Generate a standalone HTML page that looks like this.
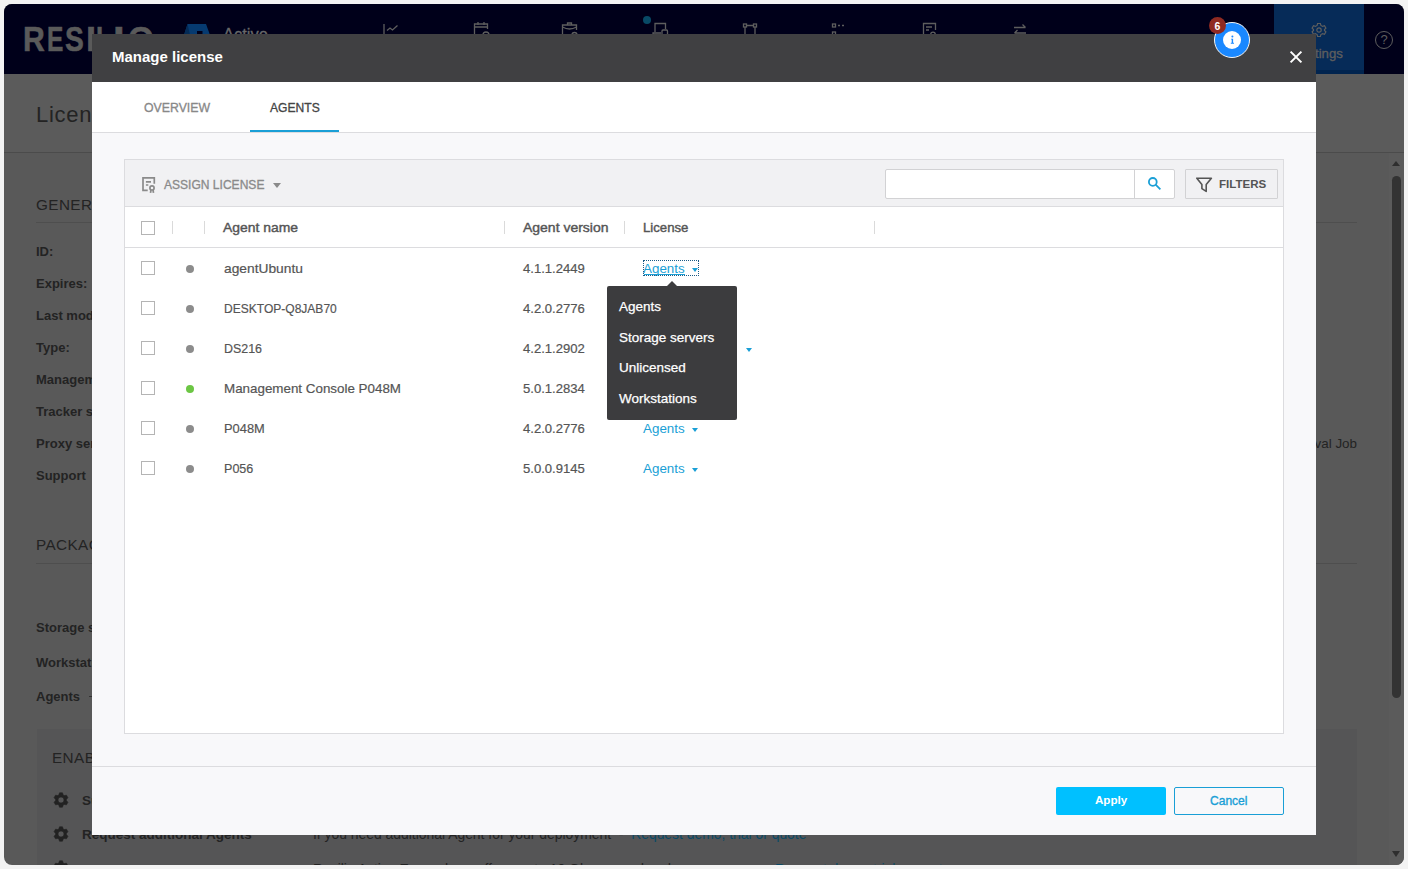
<!DOCTYPE html>
<html><head><meta charset="utf-8">
<style>
*{margin:0;padding:0;box-sizing:border-box}
html,body{width:1408px;height:869px;overflow:hidden;background:#f3f3f3;font-family:"Liberation Sans",sans-serif}
.a{position:absolute}
.t{position:absolute;white-space:nowrap;line-height:1}
#win{position:absolute;left:4px;top:4px;width:1400px;height:861px;border-radius:8px;overflow:hidden;background:#595959}
</style></head><body>
<div id="win">
  <!-- nav -->
  <div class="a" style="left:0;top:0;width:1400px;height:70px;background:#00001a"></div>
  <div class="a" style="left:1270px;top:0;width:90px;height:70px;background:#062b58"></div>
  <div class="a" style="left:1270px;top:66px;width:90px;height:4px;background:#01244f"></div>
  <!-- page header -->
  <div class="a" style="left:0;top:70px;width:1400px;height:79px;background:#5b5b5b;border-bottom:1px solid #4b4b4b"></div>
<div class="a" style="left:-4px;top:-4px;width:1408px;height:869px">
<div class="a" id="logo" style="left:0;top:0"><div class="t" style="left:22.53px;top:20.8px;font-size:35px;font-weight:bold;color:#5a5a5a;-webkit-text-stroke:0.6px #5a5a5a;transform:scaleX(0.861);transform-origin:0 0">R</div><div class="t" style="left:46.86px;top:20.8px;font-size:35px;font-weight:bold;color:#5a5a5a;-webkit-text-stroke:0.6px #5a5a5a;transform:scaleX(0.699);transform-origin:0 0">E</div><div class="t" style="left:65.47px;top:20.8px;font-size:35px;font-weight:bold;color:#5a5a5a;-webkit-text-stroke:0.6px #5a5a5a;transform:scaleX(0.806);transform-origin:0 0">S</div><div class="t" style="left:86.18px;top:20.8px;font-size:35px;font-weight:bold;color:#5a5a5a;-webkit-text-stroke:0.6px #5a5a5a;transform:scaleX(1.032);transform-origin:0 0">I</div><div class="t" style="left:95.78px;top:20.8px;font-size:35px;font-weight:bold;color:#5a5a5a;-webkit-text-stroke:0.6px #5a5a5a;transform:scaleX(0.738);transform-origin:0 0">L</div><div class="t" style="left:112.84px;top:20.8px;font-size:35px;font-weight:bold;color:#5a5a5a;-webkit-text-stroke:0.6px #5a5a5a;transform:scaleX(1.194);transform-origin:0 0">I</div><div class="t" style="left:128.32px;top:20.8px;font-size:35px;font-weight:bold;color:#5a5a5a;-webkit-text-stroke:0.6px #5a5a5a;transform:scaleX(0.949);transform-origin:0 0">O</div></div>
<svg class="a" style="left:182px;top:22px" width="30" height="20" viewBox="0 0 30 20"><path d="M5.5 2H24L28 13H2Z" fill="#063a70"/><path d="M5.5 2L2 13H8Z" fill="#042a55"/><path d="M15 9H20.5V13H15Z" fill="#00001a"/></svg>
<div class="t" style="left:223px;top:25.5px;font-size:16.5px;color:#686868;-webkit-text-stroke:0.3px #686868">Active</div>
<svg class="a" style="left:380px;top:20px" width="22" height="16" viewBox="0 0 22 16" fill="none" stroke="#5e5e5e" stroke-width="1.3"><path d="M4 4V16"/><path d="M7 10.5L10 8L12.5 10L17.5 5.5"/></svg>
<svg class="a" style="left:472px;top:20px" width="20" height="16" viewBox="0 0 20 16" fill="none" stroke="#5e5e5e" stroke-width="1.3"><path d="M2.5 15V4H15.5V9"/><path d="M2.5 7H15.5"/><path d="M6 2V5M12 2V5"/><circle cx="14" cy="15" r="3"/></svg>
<svg class="a" style="left:560px;top:20px" width="20" height="16" viewBox="0 0 20 16" fill="none" stroke="#5e5e5e" stroke-width="1.3"><path d="M2.5 15V5H16.5V10"/><path d="M7.5 5V3H11.5V5"/><path d="M2.5 7Q9.5 11 16.5 7"/><circle cx="14.5" cy="15" r="2.5"/></svg>
<div class="a" style="left:643px;top:16px;width:8px;height:8px;border-radius:50%;background:#084a66"></div>
<svg class="a" style="left:650px;top:20px" width="20" height="16" viewBox="0 0 20 16" fill="none" stroke="#5e5e5e" stroke-width="1.3"><path d="M5 12V3.5H15.5V9"/><path d="M3 15V13H11"/><rect x="12" y="10" width="5.5" height="6" rx="1"/></svg>
<svg class="a" style="left:740px;top:20px" width="20" height="16" viewBox="0 0 20 16" fill="none" stroke="#5e5e5e" stroke-width="1.3"><rect x="3.5" y="4" width="3" height="3"/><rect x="13.5" y="4" width="3" height="3"/><path d="M6.5 5.5H13.5M5 7V14M15 7V14"/></svg>
<svg class="a" style="left:830px;top:20px" width="20" height="16" viewBox="0 0 20 16" fill="none" stroke="#5e5e5e" stroke-width="1.3"><rect x="2.5" y="4" width="3" height="3"/><path d="M8 5.5H10M12 5.5H14"/><rect x="2.5" y="12" width="3" height="3"/></svg>
<svg class="a" style="left:920px;top:20px" width="20" height="16" viewBox="0 0 20 16" fill="none" stroke="#5e5e5e" stroke-width="1.3"><path d="M8 15H3.5V3.5H15.5V10"/><path d="M6 7H12M6 10H9"/><circle cx="13" cy="14.5" r="2.3"/></svg>
<svg class="a" style="left:1010px;top:20px" width="20" height="16" viewBox="0 0 20 16" fill="none" stroke="#5e5e5e" stroke-width="1.3"><path d="M4 7.5H15.5M12.5 4.5L15.5 7.5"/><path d="M16 13H4.5M7.5 10L4.5 13"/></svg>
<svg class="a" style="left:1311px;top:22px" width="16" height="16" viewBox="0 0 16 16" fill="none" stroke="#5e5e5e" stroke-width="1.2"><path d="M6.6 1.5H9.4L9.9 3.4L11.6 4.4L13.5 3.8L14.9 6.2L13.5 7.6V8.4L14.9 9.8L13.5 12.2L11.6 11.6L9.9 12.6L9.4 14.5H6.6L6.1 12.6L4.4 11.6L2.5 12.2L1.1 9.8L2.5 8.4V7.6L1.1 6.2L2.5 3.8L4.4 4.4L6.1 3.4Z"/><circle cx="8" cy="8" r="2.2"/></svg>
<div class="t" style="left:1290px;top:47px;font-size:13.2px;color:#5e5e5e;width:58px;text-align:center;-webkit-text-stroke:0.35px #5e5e5e">Settings</div>
<div class="a" style="left:1375px;top:31px;width:18px;height:18px;border-radius:50%;border:1.3px solid #5e5e5e"></div>
<div class="t" style="left:1375px;top:33px;width:18px;text-align:center;font-size:13px;color:#5e5e5e">?</div>
<div class="t" style="left:36px;top:103.5px;font-size:22px;color:#232323;letter-spacing:0.7px">License</div>
<div class="t" style="left:36px;top:196.8px;font-size:15.3px;color:#232323;letter-spacing:0.4px">GENERAL</div>
<div class="a" style="left:36px;top:222px;width:1321px;height:1px;background:#4e4e4e"></div>
<div class="t" style="left:36px;top:245px;font-size:13px;font-weight:bold;color:#232323">ID:</div>
<div class="t" style="left:36px;top:277px;font-size:13px;font-weight:bold;color:#232323">Expires:</div>
<div class="t" style="left:36px;top:309px;font-size:13px;font-weight:bold;color:#232323">Last modified:</div>
<div class="t" style="left:36px;top:341px;font-size:13px;font-weight:bold;color:#232323">Type:</div>
<div class="t" style="left:36px;top:373px;font-size:13px;font-weight:bold;color:#232323">Management Console:</div>
<div class="t" style="left:36px;top:405px;font-size:13px;font-weight:bold;color:#232323">Tracker server:</div>
<div class="t" style="left:36px;top:437px;font-size:13px;font-weight:bold;color:#232323">Proxy server:</div>
<div class="t" style="left:36px;top:469px;font-size:13px;font-weight:bold;color:#232323">Support</div>
<div class="t" style="left:1257px;top:436.6px;font-size:13.4px;color:#232323;width:100px;text-align:right">Retrieval Job</div>
<div class="t" style="left:36px;top:536.8px;font-size:15.3px;color:#232323;letter-spacing:0.4px">PACKAGES</div>
<div class="a" style="left:36px;top:563px;width:1321px;height:1px;background:#4e4e4e"></div>
<div class="t" style="left:36px;top:621px;font-size:13px;font-weight:bold;color:#232323">Storage servers</div>
<div class="t" style="left:36px;top:656px;font-size:13px;font-weight:bold;color:#232323">Workstations</div>
<div class="t" style="left:36px;top:690px;font-size:13px;font-weight:bold;color:#232323">Agents</div>
<div class="a" style="left:89px;top:696px;width:3px;height:1px;background:#333"></div>
<div class="a" style="left:37px;top:729px;width:1320px;height:140px;background:#555556"></div>
<div class="t" style="left:52px;top:749.8px;font-size:15.3px;color:#232323;letter-spacing:0.4px">ENABLED FEATURES</div>
<svg class="a" style="left:53px;top:792px" width="16" height="16" viewBox="0 0 16 16"><path fill="#222" fill-rule="evenodd" stroke="#222" stroke-width="0.6" stroke-linejoin="round" d="M5.86 2.93L6.51 0.85L9.49 0.85L10.14 2.93L11.32 3.61L13.44 3.14L14.93 5.72L13.46 7.32L13.46 8.68L14.93 10.28L13.44 12.86L11.32 12.39L10.14 13.07L9.49 15.15L6.51 15.15L5.86 13.07L4.68 12.39L2.56 12.86L1.07 10.28L2.54 8.68L2.54 7.32L1.07 5.72L2.56 3.14L4.68 3.61ZM8 5A3 3 0 1 0 8 11A3 3 0 1 0 8 5Z"/></svg>
<svg class="a" style="left:53px;top:826px" width="16" height="16" viewBox="0 0 16 16"><path fill="#222" fill-rule="evenodd" stroke="#222" stroke-width="0.6" stroke-linejoin="round" d="M5.86 2.93L6.51 0.85L9.49 0.85L10.14 2.93L11.32 3.61L13.44 3.14L14.93 5.72L13.46 7.32L13.46 8.68L14.93 10.28L13.44 12.86L11.32 12.39L10.14 13.07L9.49 15.15L6.51 15.15L5.86 13.07L4.68 12.39L2.56 12.86L1.07 10.28L2.54 8.68L2.54 7.32L1.07 5.72L2.56 3.14L4.68 3.61ZM8 5A3 3 0 1 0 8 11A3 3 0 1 0 8 5Z"/></svg>
<svg class="a" style="left:53px;top:860px" width="16" height="16" viewBox="0 0 16 16"><path fill="#222" fill-rule="evenodd" stroke="#222" stroke-width="0.6" stroke-linejoin="round" d="M5.86 2.93L6.51 0.85L9.49 0.85L10.14 2.93L11.32 3.61L13.44 3.14L14.93 5.72L13.46 7.32L13.46 8.68L14.93 10.28L13.44 12.86L11.32 12.39L10.14 13.07L9.49 15.15L6.51 15.15L5.86 13.07L4.68 12.39L2.56 12.86L1.07 10.28L2.54 8.68L2.54 7.32L1.07 5.72L2.56 3.14L4.68 3.61ZM8 5A3 3 0 1 0 8 11A3 3 0 1 0 8 5Z"/></svg>
<div class="t" style="left:82px;top:794px;font-size:13.5px;font-weight:bold;color:#232323">Support</div>
<div class="t" style="left:82px;top:828px;font-size:13.5px;font-weight:bold;color:#232323">Request additional Agents</div>
<div class="t" style="left:313px;top:828px;font-size:13.9px;color:#232323">If you need additional Agent for your deployment&nbsp; - &nbsp;<span style="color:#0a4a66">Request demo, trial or quote</span></div>
<div class="t" style="left:82px;top:863px;font-size:13.5px;font-weight:bold;color:#232323">Request Max Speed</div>
<div class="t" style="left:313px;top:863px;font-size:13.9px;color:#232323">Resilio Active Everywhere offers up to 10 Gbps speed and more</div><div class="t" style="left:775px;top:863px;font-size:13.9px;color:#0a4a66">Request demo, trial or quote</div>
<div class="a" style="left:1389px;top:153px;width:15px;height:716px;background:#5b5b5b"></div>
<div class="a" style="left:1392px;top:161px;width:0;height:0;border-left:4.5px solid transparent;border-right:4.5px solid transparent;border-bottom:5px solid #2e2e2e"></div>
<div class="a" style="left:1392px;top:176px;width:9px;height:522px;border-radius:4.5px;background:#333"></div>
<div class="a" style="left:1392px;top:850.5px;width:0;height:0;border-left:4.5px solid transparent;border-right:4.5px solid transparent;border-top:6px solid #2e2e2e"></div>
</div>
</div>

<!-- MODAL -->
<div class="a" style="left:92px;top:34px;width:1224px;height:801px;background:#f8f8fa"></div>
<div class="a" style="left:92px;top:34px;width:1224px;height:48px;background:#404042"></div>
<div class="t" style="left:112px;top:49.3px;font-size:15.5px;font-weight:bold;color:#fff;transform:scaleX(0.968);transform-origin:0 0">Manage license</div>
<div class="a" style="left:92px;top:82px;width:1224px;height:51px;background:#fff;border-bottom:1px solid #dcdcdf"></div>
<div class="t" style="left:144px;top:102px;font-size:12.3px;color:#888;-webkit-text-stroke:0.3px #888">OVERVIEW</div>
<div class="t" style="left:270px;top:102px;font-size:12.1px;color:#444;-webkit-text-stroke:0.3px #444">AGENTS</div>
<div class="a" style="left:250px;top:130px;width:89px;height:2px;background:#1a9fd6"></div>

<!-- table box -->
<div class="a" style="left:124px;top:159px;width:1160px;height:575px;background:#fff;border:1px solid #dcdcdf"></div>
<div class="a" style="left:125px;top:160px;width:1158px;height:47px;background:#f1f1f3;border-bottom:1px solid #dcdcdf"></div>
<div class="a" style="left:125px;top:247px;width:1158px;height:1px;background:#dcdcdf"></div>

<!-- rows -->
<div class="a" style="left:141px;top:221px;width:14px;height:14px;border:1px solid #b4b4b4;background:#fff"></div>
<div class="a" style="left:172px;top:221px;width:1px;height:13px;background:#dadada"></div>
<div class="a" style="left:204px;top:221px;width:1px;height:13px;background:#dadada"></div>
<div class="a" style="left:504px;top:221px;width:1px;height:13px;background:#dadada"></div>
<div class="a" style="left:624px;top:221px;width:1px;height:13px;background:#dadada"></div>
<div class="a" style="left:874px;top:221px;width:1px;height:13px;background:#dadada"></div>
<div class="t" style="left:223px;top:221px;font-size:13px;color:#555;-webkit-text-stroke:0.4px #555;transform:scaleX(1.070);transform-origin:0 0">Agent name</div>
<div class="t" style="left:523px;top:221px;font-size:13px;color:#555;-webkit-text-stroke:0.4px #555;transform:scaleX(1.075);transform-origin:0 0">Agent version</div>
<div class="t" style="left:643px;top:221px;font-size:13px;color:#555;-webkit-text-stroke:0.4px #555;transform:scaleX(1.014);transform-origin:0 0">License</div>
<div class="a" style="left:141px;top:261px;width:14px;height:14px;border:1px solid #b4b4b4;background:#fff"></div>
<div class="a" style="left:186px;top:265px;width:8px;height:8px;border-radius:50%;background:#8c8c8c"></div>
<div class="t" style="left:223.60px;top:262px;font-size:13.5px;color:#555;-webkit-text-stroke:0.2px #555;transform:scaleX(1.021);transform-origin:0 0">agentUbuntu</div>
<div class="t" style="left:523px;top:262px;font-size:13.1px;color:#555;-webkit-text-stroke:0.2px #555">4.1.1.2449</div>
<div class="t" style="left:643px;top:262px;font-size:13.4px;color:#1a9fd6">Agents</div>
<div class="a" style="left:691.5px;top:268px;width:0;height:0;border-left:3.5px solid transparent;border-right:3.5px solid transparent;border-top:4px solid #1a9fd6"></div>
<div class="a" style="left:141px;top:301px;width:14px;height:14px;border:1px solid #b4b4b4;background:#fff"></div>
<div class="a" style="left:186px;top:305px;width:8px;height:8px;border-radius:50%;background:#8c8c8c"></div>
<div class="t" style="left:223.60px;top:302px;font-size:13.5px;color:#555;-webkit-text-stroke:0.2px #555;transform:scaleX(0.891);transform-origin:0 0">DESKTOP-Q8JAB70</div>
<div class="t" style="left:523px;top:302px;font-size:13.1px;color:#555;-webkit-text-stroke:0.2px #555">4.2.0.2776</div>
<div class="a" style="left:141px;top:341px;width:14px;height:14px;border:1px solid #b4b4b4;background:#fff"></div>
<div class="a" style="left:186px;top:345px;width:8px;height:8px;border-radius:50%;background:#8c8c8c"></div>
<div class="t" style="left:223.60px;top:342px;font-size:13.5px;color:#555;-webkit-text-stroke:0.2px #555;transform:scaleX(0.920);transform-origin:0 0">DS216</div>
<div class="t" style="left:523px;top:342px;font-size:13.1px;color:#555;-webkit-text-stroke:0.2px #555">4.2.1.2902</div>
<div class="a" style="left:745.5px;top:348px;width:0;height:0;border-left:3.5px solid transparent;border-right:3.5px solid transparent;border-top:4px solid #1a9fd6"></div>
<div class="a" style="left:141px;top:381px;width:14px;height:14px;border:1px solid #b4b4b4;background:#fff"></div>
<div class="a" style="left:186px;top:385px;width:8px;height:8px;border-radius:50%;background:#6cc644"></div>
<div class="t" style="left:223.60px;top:382px;font-size:13.5px;color:#555;-webkit-text-stroke:0.2px #555;transform:scaleX(0.991);transform-origin:0 0">Management Console P048M</div>
<div class="t" style="left:523px;top:382px;font-size:13.1px;color:#555;-webkit-text-stroke:0.2px #555">5.0.1.2834</div>
<div class="a" style="left:141px;top:421px;width:14px;height:14px;border:1px solid #b4b4b4;background:#fff"></div>
<div class="a" style="left:186px;top:425px;width:8px;height:8px;border-radius:50%;background:#8c8c8c"></div>
<div class="t" style="left:223.60px;top:422px;font-size:13.5px;color:#555;-webkit-text-stroke:0.2px #555;transform:scaleX(0.953);transform-origin:0 0">P048M</div>
<div class="t" style="left:523px;top:422px;font-size:13.1px;color:#555;-webkit-text-stroke:0.2px #555">4.2.0.2776</div>
<div class="t" style="left:643px;top:422px;font-size:13.4px;color:#1a9fd6">Agents</div>
<div class="a" style="left:691.5px;top:428px;width:0;height:0;border-left:3.5px solid transparent;border-right:3.5px solid transparent;border-top:4px solid #1a9fd6"></div>
<div class="a" style="left:141px;top:461px;width:14px;height:14px;border:1px solid #b4b4b4;background:#fff"></div>
<div class="a" style="left:186px;top:465px;width:8px;height:8px;border-radius:50%;background:#8c8c8c"></div>
<div class="t" style="left:223.60px;top:462px;font-size:13.5px;color:#555;-webkit-text-stroke:0.2px #555;transform:scaleX(0.931);transform-origin:0 0">P056</div>
<div class="t" style="left:523px;top:462px;font-size:13.1px;color:#555;-webkit-text-stroke:0.2px #555">5.0.0.9145</div>
<div class="t" style="left:643px;top:462px;font-size:13.4px;color:#1a9fd6">Agents</div>
<div class="a" style="left:691.5px;top:468px;width:0;height:0;border-left:3.5px solid transparent;border-right:3.5px solid transparent;border-top:4px solid #1a9fd6"></div>

<!-- footer -->
<div class="a" style="left:92px;top:766px;width:1224px;height:1px;background:#dcdcdf"></div>
<div class="a" style="left:1056px;top:787px;width:110px;height:28px;background:#00c0ff;border-radius:2px"></div>
<div class="a" style="left:1174px;top:787px;width:110px;height:28px;border:1px solid #1a9fd6;border-radius:2px"></div>

<!-- tooltip -->
<div class="a" style="left:607px;top:286px;width:130px;height:134px;background:#3c3c3e;border-radius:2px"></div>
<!-- extras -->
<svg class="a" style="left:141px;top:176px" width="16" height="18" viewBox="0 0 16 18" fill="none" stroke="#8a8a8a" stroke-width="1.7"><path d="M6.7 14.3H2V1.8H13.3V7.7"/><path d="M4.9 5.9H10M4.9 9H7.3"/><circle cx="11" cy="11.9" r="2.1"/><path d="M10 14L9.5 16.8M12 14L12.5 16.8"/></svg>
<div class="t" style="left:164px;top:179px;font-size:12.05px;color:#8a8a8a;-webkit-text-stroke:0.3px #8a8a8a">ASSIGN LICENSE</div>
<div class="a" style="left:273px;top:183px;width:0;height:0;border-left:4px solid transparent;border-right:4px solid transparent;border-top:5px solid #8a8a8a"></div>
<div class="a" style="left:885px;top:169px;width:290px;height:30px;background:#fff;border:1px solid #d2d2d4;border-radius:2px"></div>
<div class="a" style="left:1134px;top:170px;width:1px;height:28px;background:#d2d2d4"></div>
<svg class="a" style="left:1146px;top:176px" width="16" height="16" viewBox="0 0 16 16" fill="none" stroke="#1a9fd6" stroke-width="1.8"><circle cx="6.8" cy="5.9" r="3.9"/><path d="M9.6 8.7L14.4 13.3"/></svg>
<div class="a" style="left:1185px;top:169px;width:93px;height:30px;background:#f1f1f3;border:1px solid #d2d2d4;border-radius:1px"></div>
<svg class="a" style="left:1195px;top:176px" width="18" height="17" viewBox="0 0 18 17" fill="none" stroke="#555" stroke-width="1.6" stroke-linejoin="round"><path d="M1.8 2.2H16.4L11.2 8.6V15.4L6.9 12.6V8.6Z"/></svg>
<div class="t" style="left:1219px;top:179px;font-size:11.55px;font-weight:bold;color:#555">FILTERS</div>
<div class="a" style="left:643px;top:260px;width:56px;height:16px;border:1px dotted #1a5a85"></div>
<div class="a" style="left:644px;top:274px;width:41px;height:1px;background:#1a9fd6"></div>
<div class="a" style="left:667px;top:281px;width:0;height:0;border-left:5px solid transparent;border-right:5px solid transparent;border-bottom:5px solid #3c3c3e"></div>
<div class="t" style="left:619px;top:300px;font-size:13.5px;color:#fff;-webkit-text-stroke:0.25px #fff">Agents</div>
<div class="t" style="left:619px;top:331px;font-size:13.5px;color:#fff;-webkit-text-stroke:0.25px #fff">Storage servers</div>
<div class="t" style="left:619px;top:361px;font-size:13.5px;color:#fff;-webkit-text-stroke:0.25px #fff">Unlicensed</div>
<div class="t" style="left:619px;top:392px;font-size:13.5px;color:#fff;-webkit-text-stroke:0.25px #fff">Workstations</div>
<div class="t" style="left:1095px;top:794.2px;font-size:11.6px;font-weight:bold;color:#fff">Apply</div>
<div class="t" style="left:1210px;top:795px;font-size:12.05px;color:#1a9fd6;-webkit-text-stroke:0.35px #1a9fd6">Cancel</div>
<svg class="a" style="left:1288px;top:49px" width="16" height="16" viewBox="0 0 16 16" stroke="#fff" stroke-width="2"><path d="M2.6 2.6L13.4 13.4M13.4 2.6L2.6 13.4"/></svg>
<div class="a" style="left:1214px;top:22px;width:36px;height:36px;border-radius:50%;background:#1a88ff;border:1px solid #f4f4f4"></div>
<div class="a" style="left:1223px;top:31px;width:18px;height:18px;border-radius:50%;background:#fff"></div>
<svg class="a" style="left:1223px;top:31px" width="18" height="18" viewBox="0 0 18 18" fill="#1a88ff"><circle cx="9.4" cy="5.5" r="1.0"/><path d="M8.1 7.7H10.1V11.8H11V12.7H7.8V11.8H8.7V8.5H8.1Z"/></svg>
<div class="a" style="left:1209px;top:17px;width:17px;height:17px;border-radius:50%;background:#8f2a22"></div>
<div class="t" style="left:1208.5px;top:20.6px;width:18px;text-align:center;font-size:10.5px;font-weight:bold;color:#fff">6</div>
</body></html>
